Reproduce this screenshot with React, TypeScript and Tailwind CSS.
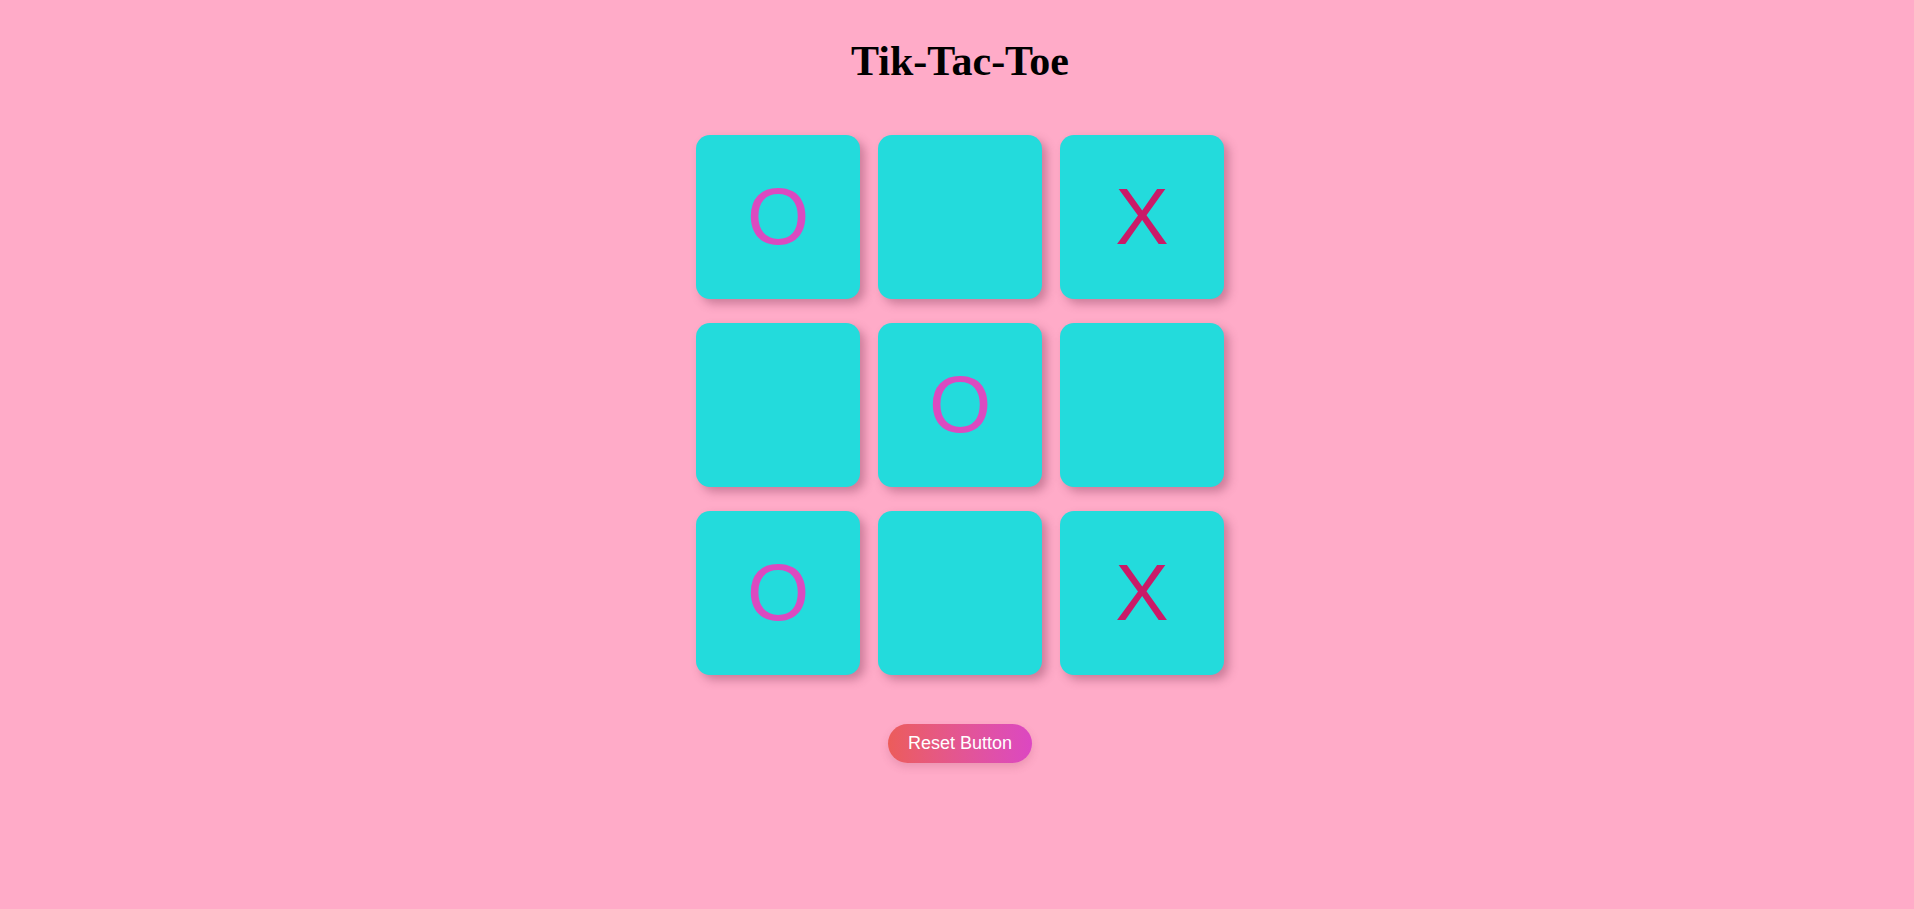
import React from "react";

const board: string[] = ["O", "", "X", "", "O", "", "O", "", "X"];

export default function App() {
  return (
    <div className="min-h-[909px] w-full bg-[#ffabc8] pl-[6px] flex flex-col items-center">
      <h1
        className="mt-[37px] text-[42px] leading-[48px] font-bold text-black"
        style={{ fontFamily: '"Liberation Serif", "Times New Roman", serif' }}
      >
        Tik-Tac-Toe
      </h1>
      <div className="mt-[50px] grid grid-cols-[164px_164px_164px] gap-x-[18px] gap-y-[24px]">
        {board.map((v, i) => (
          <div
            key={i}
            className="w-[164px] h-[164px] rounded-[14px] bg-[#23dbdc] shadow-[5px_5px_10px_rgba(110,40,70,0.35)] flex items-center justify-center"
          >
            <span
              className={
                "text-[80px] " + (v === "X" ? "text-[#ca1a68]" : "text-[#db4ac0]")
              }
              style={{ fontFamily: '"Liberation Sans", Arial, sans-serif' }}
            >
              {v}
            </span>
          </div>
        ))}
      </div>
      <button
        className="mt-[49px] rounded-full px-[20px] py-[9px] text-[18px] leading-[21px] text-white bg-gradient-to-r from-[#ec5c5a] to-[#dc47c2] shadow-[0_4px_8px_rgba(150,60,90,0.2)]"
        style={{ fontFamily: '"Liberation Sans", Arial, sans-serif' }}
      >
        Reset Button
      </button>
    </div>
  );
}
